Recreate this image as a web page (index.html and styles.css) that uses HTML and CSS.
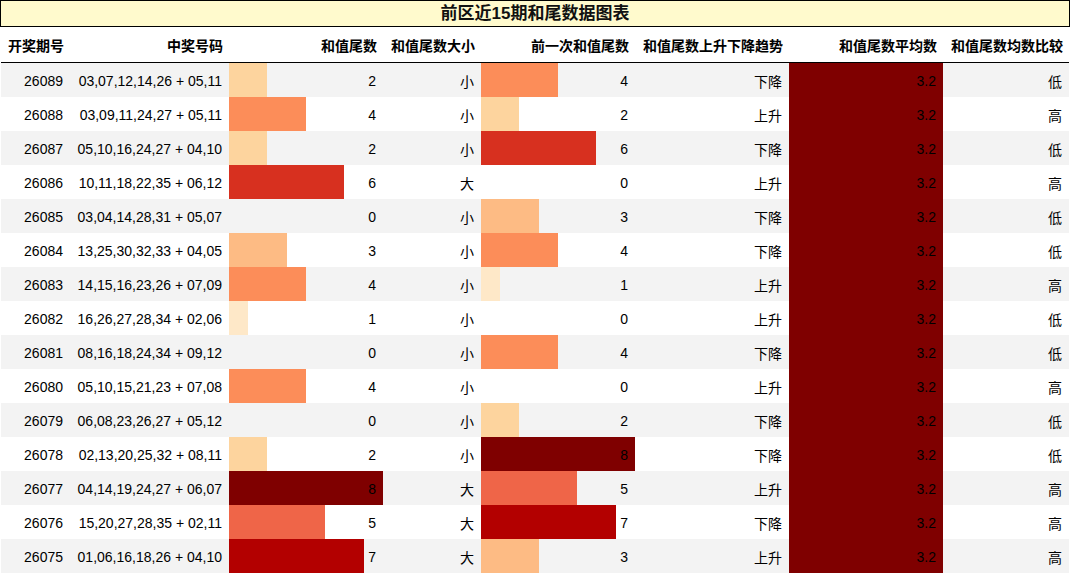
FILE: index.html
```html
<!DOCTYPE html>
<html lang="zh-CN">
<head>
<meta charset="utf-8">
<title>前区近15期和尾数据图表</title>
<link rel="stylesheet" href="styles.css">
</head>
<body>
<div class="caption">前区近15期和尾数据图表</div>
<table class="grid">
  <colgroup>
    <col class="c1"><col class="c2"><col class="c3"><col class="c4"><col class="c5"><col class="c6"><col class="c7"><col class="c8">
  </colgroup>
  <thead>
    <tr><th>开奖期号</th><th>中奖号码</th><th>和值尾数</th><th>和值尾数大小</th><th>前一次和值尾数</th><th>和值尾数上升下降趋势</th><th>和值尾数平均数</th><th>和值尾数均数比较</th></tr>
  </thead>
  <tbody>
    <tr><td>26089</td><td>03,07,12,14,26 + 05,11</td><td class="b2">2</td><td>小</td><td class="b4">4</td><td>下降</td><td class="avg">3.2</td><td>低</td></tr>
    <tr><td>26088</td><td>03,09,11,24,27 + 05,11</td><td class="b4">4</td><td>小</td><td class="b2">2</td><td>上升</td><td class="avg">3.2</td><td>高</td></tr>
    <tr><td>26087</td><td>05,10,16,24,27 + 04,10</td><td class="b2">2</td><td>小</td><td class="b6">6</td><td>下降</td><td class="avg">3.2</td><td>低</td></tr>
    <tr><td>26086</td><td>10,11,18,22,35 + 06,12</td><td class="b6">6</td><td>大</td><td>0</td><td>上升</td><td class="avg">3.2</td><td>高</td></tr>
    <tr><td>26085</td><td>03,04,14,28,31 + 05,07</td><td>0</td><td>小</td><td class="b3">3</td><td>下降</td><td class="avg">3.2</td><td>低</td></tr>
    <tr><td>26084</td><td>13,25,30,32,33 + 04,05</td><td class="b3">3</td><td>小</td><td class="b4">4</td><td>下降</td><td class="avg">3.2</td><td>低</td></tr>
    <tr><td>26083</td><td>14,15,16,23,26 + 07,09</td><td class="b4">4</td><td>小</td><td class="b1">1</td><td>上升</td><td class="avg">3.2</td><td>高</td></tr>
    <tr><td>26082</td><td>16,26,27,28,34 + 02,06</td><td class="b1">1</td><td>小</td><td>0</td><td>上升</td><td class="avg">3.2</td><td>低</td></tr>
    <tr><td>26081</td><td>08,16,18,24,34 + 09,12</td><td>0</td><td>小</td><td class="b4">4</td><td>下降</td><td class="avg">3.2</td><td>低</td></tr>
    <tr><td>26080</td><td>05,10,15,21,23 + 07,08</td><td class="b4">4</td><td>小</td><td>0</td><td>上升</td><td class="avg">3.2</td><td>高</td></tr>
    <tr><td>26079</td><td>06,08,23,26,27 + 05,12</td><td>0</td><td>小</td><td class="b2">2</td><td>下降</td><td class="avg">3.2</td><td>低</td></tr>
    <tr><td>26078</td><td>02,13,20,25,32 + 08,11</td><td class="b2">2</td><td>小</td><td class="b8">8</td><td>下降</td><td class="avg">3.2</td><td>低</td></tr>
    <tr><td>26077</td><td>04,14,19,24,27 + 06,07</td><td class="b8">8</td><td>大</td><td class="b5">5</td><td>上升</td><td class="avg">3.2</td><td>高</td></tr>
    <tr><td>26076</td><td>15,20,27,28,35 + 02,11</td><td class="b5">5</td><td>大</td><td class="b7">7</td><td>下降</td><td class="avg">3.2</td><td>高</td></tr>
    <tr><td>26075</td><td>01,06,16,18,26 + 04,10</td><td class="b7">7</td><td>大</td><td class="b3">3</td><td>上升</td><td class="avg">3.2</td><td>高</td></tr>
  </tbody>
</table>
</body>
</html>
```
FILE: styles.css
```css
html, body {
  margin: 0;
  padding: 0;
  background: #ffffff;
}
body {
  font-family: "Liberation Sans", Arial, "Noto Sans CJK SC", sans-serif;
  font-size: 14px;
  color: #000000;
}
.caption {
  box-sizing: border-box;
  width: 1070px;
  height: 27px;
  border: 1px solid #000000;
  background: #fffacd;
  text-align: center;
  font-weight: bold;
  font-size: 17px;
  line-height: 25px;
  color: #111111;
}
.grid {
  border-collapse: collapse;
  table-layout: fixed;
  width: 1068px;
  margin-left: 1px;
}
.c1 { width: 69px; }
.c2 { width: 159px; }
.c3 { width: 154px; }
.c4 { width: 98px; }
.c5 { width: 154px; }
.c6 { width: 154px; }
.c7 { width: 154px; }
.c8 { width: 126px; }
.grid th {
  height: 35px;
  padding: 0 6px 0 7px;
  text-align: right;
  font-weight: bold;
  font-size: 14px;
  border-bottom: 1px solid #000000;
  white-space: nowrap;
}
.grid th:first-child {
  text-align: left;
}
.grid td {
  height: 34px;
  padding: 2px 7px 0 7px;
  box-sizing: border-box;
  text-align: right;
  white-space: nowrap;
  background-repeat: no-repeat;
}
.grid tbody tr:nth-child(odd) td {
  background-color: #f3f3f3;
}
.grid tbody tr:nth-child(even) td {
  background-color: #ffffff;
}
.b1 { background-image: linear-gradient(90deg, #fee8c8 12.5%, transparent 12.5%); }
.b2 { background-image: linear-gradient(90deg, #fdd49e 25%, transparent 25%); }
.b3 { background-image: linear-gradient(90deg, #fdbb84 37.5%, transparent 37.5%); }
.b4 { background-image: linear-gradient(90deg, #fc8d59 50%, transparent 50%); }
.b5 { background-image: linear-gradient(90deg, #ef6548 62.5%, transparent 62.5%); }
.b6 { background-image: linear-gradient(90deg, #d7301f 75%, transparent 75%); }
.b7 { background-image: linear-gradient(90deg, #b30000 87.5%, transparent 87.5%); }
.b8 { background-image: linear-gradient(90deg, #7f0000 100%, transparent 100%); }
.avg { background-image: linear-gradient(90deg, #7f0000 100%, transparent 100%); }
```
